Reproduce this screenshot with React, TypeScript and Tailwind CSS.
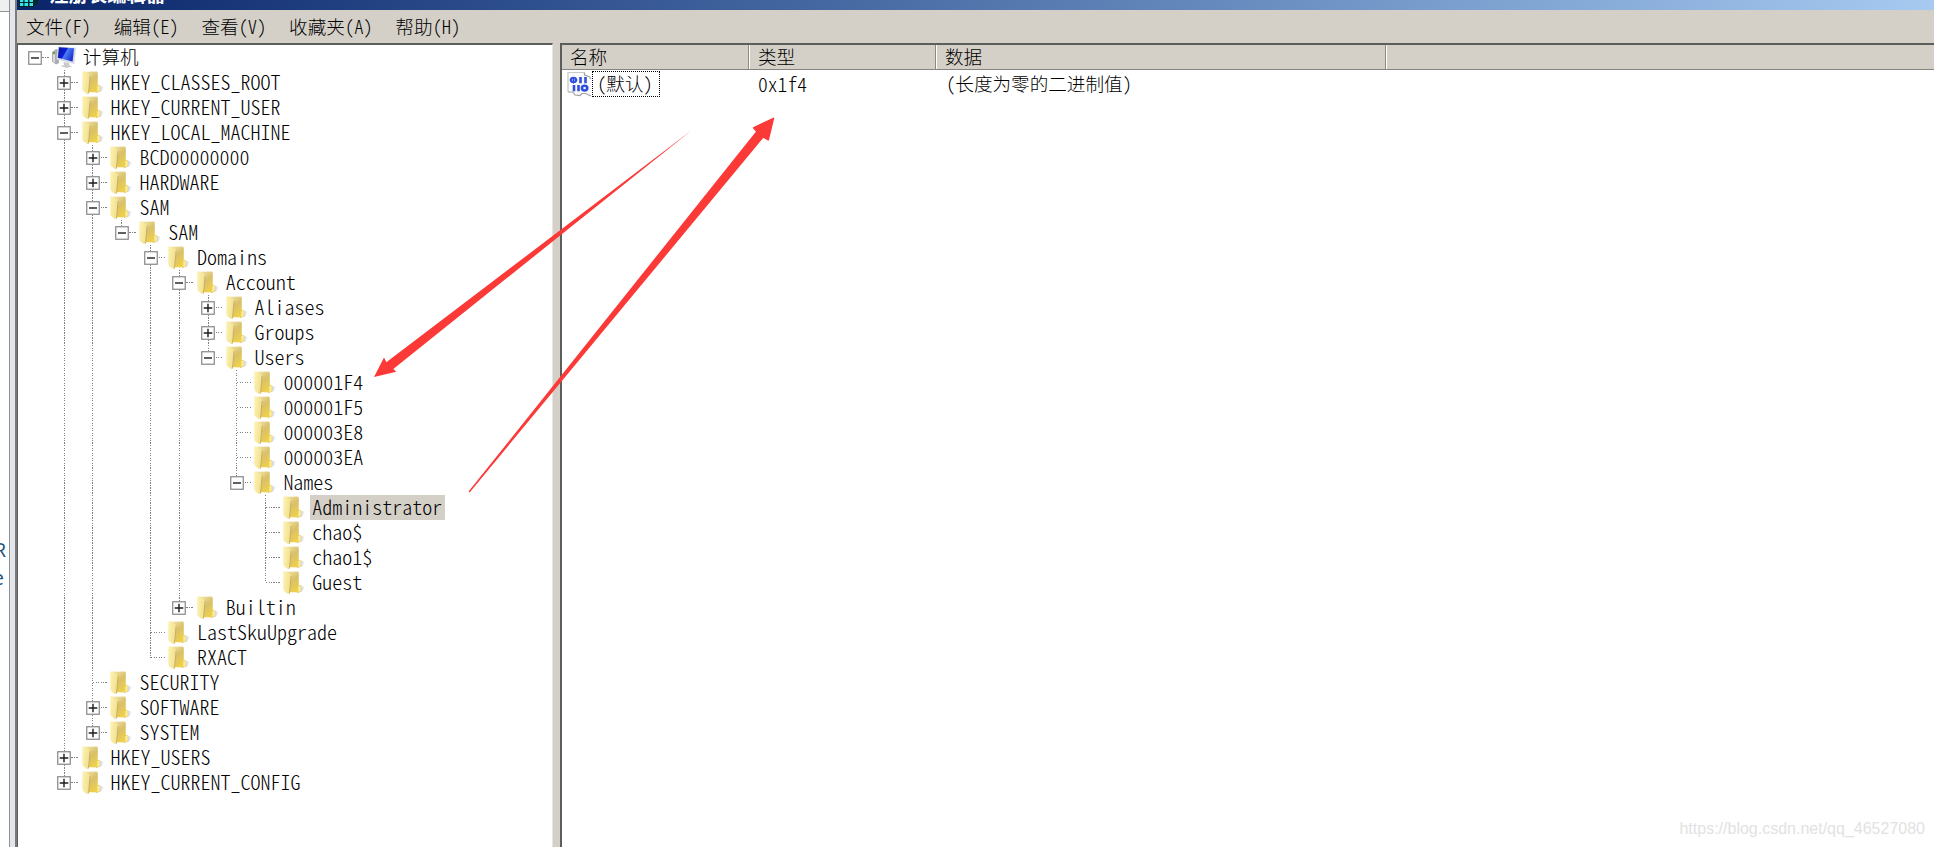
import React from 'react';

interface KeyNode {
  name: string;
  closed?: boolean;
  selected?: boolean;
  children?: KeyNode[];
}

const registry: KeyNode[] = [
  { name: 'HKEY_CLASSES_ROOT', closed: true },
  { name: 'HKEY_CURRENT_USER', closed: true },
  {
    name: 'HKEY_LOCAL_MACHINE',
    children: [
      { name: 'BCD00000000', closed: true },
      { name: 'HARDWARE', closed: true },
      {
        name: 'SAM',
        children: [
          {
            name: 'SAM',
            children: [
              {
                name: 'Domains',
                children: [
                  {
                    name: 'Account',
                    children: [
                      { name: 'Aliases', closed: true },
                      { name: 'Groups', closed: true },
                      {
                        name: 'Users',
                        children: [
                          { name: '000001F4' },
                          { name: '000001F5' },
                          { name: '000003E8' },
                          { name: '000003EA' },
                          {
                            name: 'Names',
                            children: [
                              { name: 'Administrator', selected: true },
                              { name: 'chao$' },
                              { name: 'chao1$' },
                              { name: 'Guest' },
                            ],
                          },
                        ],
                      },
                    ],
                  },
                  { name: 'Builtin', closed: true },
                ],
              },
              { name: 'LastSkuUpgrade' },
              { name: 'RXACT' },
            ],
          },
        ],
      },
      { name: 'SECURITY' },
      { name: 'SOFTWARE', closed: true },
      { name: 'SYSTEM', closed: true },
    ],
  },
  { name: 'HKEY_USERS', closed: true },
  { name: 'HKEY_CURRENT_CONFIG', closed: true },
];

const menus = ['文件(F)', '编辑(E)', '查看(V)', '收藏夹(A)', '帮助(H)'];

const columns = [
  { title: '名称', width: 'w-[187px]' },
  { title: '类型', width: 'w-[187px]' },
  { title: '数据', width: 'w-[450px]' },
];

const FolderIcon = () => (
  <svg width="25" height="25" viewBox="0 0 25 25" className="shrink-0">
    <defs>
      <linearGradient id="front" x1="0" x2="1" y1="0" y2="0.3">
        <stop offset="0" stopColor="#fdf4b8" />
        <stop offset="1" stopColor="#f2df8c" />
      </linearGradient>
      <linearGradient id="back" x1="0" x2="0.6" y1="0" y2="1">
        <stop offset="0" stopColor="#f3e7ac" />
        <stop offset="0.5" stopColor="#d9c06a" />
        <stop offset="1" stopColor="#efd14a" />
      </linearGradient>
      <linearGradient id="shade" x1="0" x2="1" y1="0" y2="0">
        <stop offset="0" stopColor="#808080" stopOpacity="0.8" />
        <stop offset="1" stopColor="#b0b0b0" stopOpacity="0" />
      </linearGradient>
    </defs>
    <path d="M16 22.8 L19.5 15.5 L24.5 17 L21 21.5 Z" fill="url(#shade)" />
    <path d="M5 1.8 L16.5 1.4 Q17.8 1.6 17.8 3 V15 L20 15.5 V20.5 L18 22.5 L6 22 Z" fill="url(#back)" />
    <path d="M17.2 16 L19.8 15.4 V20.6 L17.4 22.4 Z" fill="#f9eb9b" />
    <path d="M2.2 2 Q2.8 0.8 5 1.4 L9.6 4.2 Q10.4 5 10.2 7 L8.6 23.6 Q8 24.4 7 23.9 L2.8 20.9 Q2 19.2 2.2 17 Z" fill="url(#front)" />
    <path d="M10.1 6 L8.5 23.4" stroke="#c4aa5c" strokeWidth="0.9" fill="none" />
  </svg>
);

const ComputerIcon = () => (
  <svg width="26" height="25" viewBox="0 0 26 25" className="shrink-0">
    <defs>
      <linearGradient id="screen" x1="0" x2="1" y1="0" y2="0.5">
        <stop offset="0" stopColor="#0a1496" />
        <stop offset="0.5" stopColor="#0a20dc" />
        <stop offset="0.55" stopColor="#4f7df2" />
        <stop offset="1" stopColor="#1c35d8" />
      </linearGradient>
    </defs>
    <path d="M1 7 L5 4 L8 5 V18 L5 19.5 L1 16.5 Z" fill="#a9adb0" />
    <path d="M2 9 V16.5 L4 17.5 V9.5 Z" fill="#d8dadb" />
    <path d="M2 7 H4 V9 H2 Z" fill="#58a848" />
    <path d="M7 1.4 L25 2.8 L23.4 19 L5.5 14.5 Z" fill="#d5d9e2" />
    <path d="M8 2.2 L23 3.3 L21.6 16.4 L6.8 12.8 Z" fill="url(#screen)" />
    <path d="M12.5 17 L18 18 L18.5 20.5 L21.5 21.3 L15.5 23 L9.5 21 L13 20 Z" fill="#c9cbce" />
  </svg>
);

const BinaryIcon = () => (
  <svg width="25" height="26" viewBox="0 0 25 26" className="shrink-0">
    <path d="M1 1.5 H17.5 L24 6 V25 L18.5 22.5 H15 L13 24.5 L8 24 L6 21.5 L1 21 Z" fill="#fafafd" />
    <path d="M1 21 V1.5 H17.5" fill="none" stroke="#c9c9c9" strokeWidth="1.2" />
    <path d="M17.5 1.5 V4 L22 5.5 L24 8 M1 21 H6 L8 24 L13 24.5 L15 22.5 H18.5 L24 25" fill="none" stroke="#a2a2a2" strokeWidth="1.2" />
    <g stroke="#2f4fdc" strokeWidth="2.6" fill="none">
      <ellipse cx="6.5" cy="9" rx="2.6" ry="2.2" strokeWidth="2" />
      <path d="M2.5 9 H10.5 M6.5 6 V12.5" strokeWidth="1" />
      <path d="M13.5 6 V12.3 M18.5 6 V12.3" />
      <path d="M7 14 V20.3 M11.5 14 V20.3" />
      <ellipse cx="17.6" cy="17.1" rx="2.7" ry="2.4" />
    </g>
  </svg>
);

const Expander = ({ open }: { open: boolean }) => (
  <svg width="14" height="14" viewBox="0 0 14 14" className="col-start-1 row-start-1 self-center justify-self-center">
    <rect x="0.75" y="0.75" width="12.5" height="12.5" fill="#fff" stroke="#868686" strokeWidth="1.2" />
    <path d={open ? 'M3 7 H11' : 'M2.7 7 H11.3 M7 2.7 V11.3'} stroke="#1c1c1c" strokeWidth="1.4" />
  </svg>
);

const Guide = ({ half }: { half?: boolean }) => (
  <div
    className={
      'col-start-1 row-start-1 w-px self-start justify-self-center bg-[repeating-linear-gradient(to_bottom,#808080_0_1.25px,transparent_1.25px_2.5px)] ' +
      (half ? 'h-[13px]' : 'h-[25px]')
    }
  />
);

interface RowProps {
  node: KeyNode;
  guides: boolean[];
  last: boolean;
  root?: boolean;
}

const TreeRow: React.FC<RowProps> = ({ node, guides, last, root }) => {
  const expandable = node.closed || !!node.children;
  return (
    <div className="flex h-[25px] items-center">
      {guides.map((shown, i) => (
        <div key={i} className="grid h-[25px] w-[28.8px] shrink-0">
          {shown && <Guide />}
        </div>
      ))}
      <div className="grid h-[25px] w-[28.8px] shrink-0">
        {!root && <Guide half={last} />}
        <div className="col-start-1 row-start-1 h-px w-[14.4px] self-center justify-self-end bg-[repeating-linear-gradient(to_right,#808080_0_1.25px,transparent_1.25px_2.5px)]" />
        {expandable && <Expander open={!!node.children} />}
      </div>
      <div className="flex w-[30px] shrink-0 pl-px">
        {root ? <ComputerIcon /> : <FolderIcon />}
      </div>
      <span
        className={
          'flex h-[25px] items-center whitespace-nowrap px-[2px] pb-[2px] leading-none ' +
          (root ? 'ml-px text-[18.6px] ' : 'text-[20px] ') +
          (node.selected ? 'w-[135px] bg-[#d4d0c8]' : '')
        }
      >
        {node.name}
      </span>
    </div>
  );
};

const renderNodes = (nodes: KeyNode[], guides: boolean[]): React.ReactNode =>
  nodes.map((node, i) => {
    const last = i === nodes.length - 1;
    return (
      <React.Fragment key={node.name}>
        <TreeRow node={node} guides={guides} last={last} />
        {node.children && renderNodes(node.children, [...guides, !last])}
      </React.Fragment>
    );
  });

const Arrows = () => (
  <svg width="1934" height="847" viewBox="0 0 1934 847" className="pointer-events-none absolute left-0 top-0">
    <path d="M374 377 L384 357.5 L386.3 362.3 L692 130 L393.3 369 L396.3 371.8 Z" fill="#fb3a38" />
    <path
      d="M773.5 118.3 L753.5 127.8 L756.8 131.6 L469.5 491.5 L763 137 L768.3 139.8 Z"
      fill="#fb3a38"
      stroke="#fb3a38"
      strokeWidth="1.4"
      strokeLinejoin="round"
    />
  </svg>
);

export default function App() {
  return (
    <div className="relative flex h-[847px] w-[1934px] overflow-hidden bg-white font-['Noto_Sans_CJK_SC',sans-serif] font-light text-black [font-feature-settings:'hwid'_1]">
      <aside className="flex w-[15px] shrink-0 bg-[#e3e5e9]">
        <div className="flex w-[10px] flex-col border-r border-[#8d929b] bg-white">
          <div className="h-3 shrink-0 border-b border-[#8d929b] bg-[#f0f0f0]" />
          <div className="mt-[524px] flex flex-col items-end overflow-hidden pr-[3px] font-['Open_Sans',sans-serif] text-[20px] font-normal leading-[28px] text-[#24547c]">
            <span>R</span>
            <span className="pr-[2px]">e</span>
          </div>
        </div>
      </aside>
      <div className="flex min-w-0 grow flex-col border-l-2 border-[#777b7b] bg-[#d4d0c8]">
        <header className="flex h-[10px] shrink-0 items-end overflow-hidden bg-linear-to-r from-[#0a246a] to-[#a6caf0] pl-[2px]">
          <svg width="20" height="10" viewBox="0 0 20 10" className="shrink-0">
            <path d="M0 0 H19 V3 L14 7 H0 Z" fill="#06262c" />
            <path d="M1 0 H4.3 V2 H1 Z M5.5 0 H9 V2 H5.5 Z M10.5 0 H14 V2 H10.5 Z M1 3 H4.3 V6 H1 Z M5.5 3 H9 V6 H5.5 Z M10.5 3 H14 V6 H10.5 Z" fill="#37e6e6" />
          </svg>
          <span className="mb-[6px] ml-[10px] text-[19.4px] font-bold leading-[20px] text-white">注册表编辑器</span>
        </header>
        <nav className="flex h-[33px] shrink-0 items-center gap-[22.6px] pb-px pl-[9px] text-[18.6px] leading-none">
          {menus.map((item) => (
            <span key={item} className="whitespace-nowrap">
              {item}
            </span>
          ))}
        </nav>
        <main className="flex min-h-0 grow">
          <section className="w-[536px] shrink-0 border-l border-r border-t-2 border-[#5c5e5b] border-r-[#e8e6e1] bg-white pl-[3px]">
            <TreeRow node={{ name: '计算机', children: registry }} guides={[]} last root />
            <div className="pl-[28.8px]">{renderNodes(registry, [])}</div>
          </section>
          <section className="ml-[7px] min-w-0 grow border-l-2 border-t-2 border-[#5c5e5b] bg-white">
            <div className="flex h-[25px] border-b border-[#858481] bg-[#d4d0c8] text-[18.6px] leading-none">
              {columns.map((col, i) => (
                <div
                  key={col.title}
                  className={
                    'flex shrink-0 items-center border-r border-[#8b8984] pb-px pl-[8px] ' +
                    (i > 0 ? 'border-l border-l-white ' : '') +
                    col.width
                  }
                >
                  {col.title}
                </div>
              ))}
              <div className="grow border-l border-white" />
            </div>
            <div className="flex h-[27px] items-center text-[18.6px] leading-none">
              <div className="flex w-[187px] shrink-0 items-center pl-[5px]">
                <BinaryIcon />
                <span className="flex h-[26px] w-[68px] items-center border border-dotted border-black pb-px pl-[4px]">
                  (默认)
                </span>
              </div>
              <span className="w-[187px] shrink-0 pl-[9px] text-[19.6px]">0x1f4</span>
              <span className="pb-px pl-[10px]">(长度为零的二进制值)</span>
            </div>
          </section>
        </main>
      </div>
      <Arrows />
      <div className="absolute bottom-[8px] right-[9px] font-['Liberation_Sans',sans-serif] text-[16px] font-normal leading-[20px] text-[#e2e2e2]">
        https://blog.csdn.net/qq_46527080
      </div>
    </div>
  );
}
